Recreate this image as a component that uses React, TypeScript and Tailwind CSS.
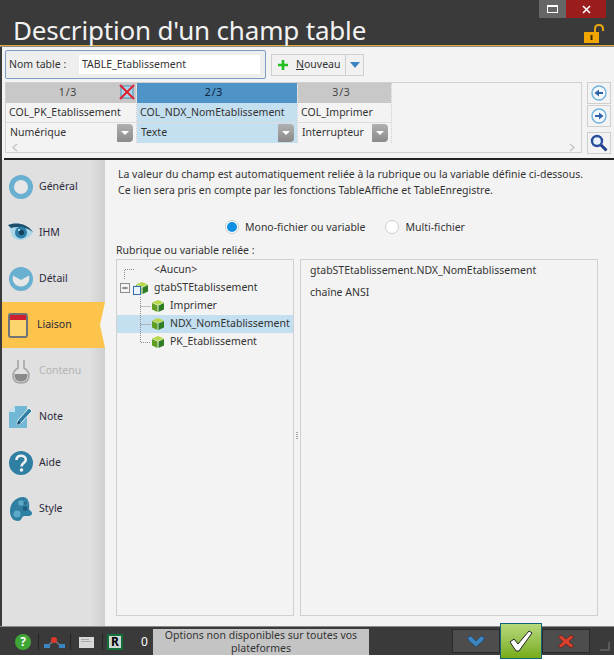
import type { ReactNode } from "react";

function Cube({ className = "" }: { className?: string }) {
  return (
    <svg width="14" height="14" viewBox="0 0 14 14" className={className}>
      <path d="M7 1 13 3.5 7 6 1 3.5Z" fill="#b7d84a" />
      <path d="M1 4 6.5 6.5V13L1 10.5Z" fill="#5f9e1e" />
      <path d="M13 4 7.5 6.5V13L13 10.5Z" fill="#2f7d22" />
    </svg>
  );
}

function Combo({ label, selected }: { label: string; selected?: boolean }) {
  return (
    <div className={`flex h-5 items-center justify-between pl-1 pr-[3px] ${selected ? "bg-[#c3dff0]" : ""}`}>
      <span>{label}</span>
      <span className="flex h-[18px] w-4 items-center justify-center rounded-r-[4px] rounded-l-[1px] bg-gradient-to-b from-[#b0b0b0] to-[#8a8a8a]">
        <span className="h-0 w-0 border-x-[4px] border-t-[4px] border-x-transparent border-t-white" />
      </span>
    </div>
  );
}

function Column({
  head,
  name,
  type,
  width,
  selected,
  children,
}: {
  head: string;
  name: string;
  type: string;
  width: string;
  selected?: boolean;
  children?: ReactNode;
}) {
  return (
    <div className={`${width} relative shrink-0 border-r border-dotted border-[#cfcfcf]`}>
      <div className={`flex h-[20px] items-center justify-center pr-[6px] tracking-[0.8px] ${selected ? "bg-[#4f94c6] text-[#10233a]" : "bg-[#c8c8c8] text-[#444]"}`}>
        {head}
      </div>
      <div className={`flex h-[20px] items-center border-b border-[#dcdcdc] pl-[3px] ${selected ? "bg-[#c3dff0]" : ""}`}>{name}</div>
      <Combo label={type} selected={selected} />
      {children}
    </div>
  );
}

function SideIcon({ name }: { name: string }) {
  if (name === "general")
    return (
      <svg width="24" height="24" viewBox="0 0 24 24">
        <circle cx="12" cy="12" r="9.5" fill="#e6e6e6" stroke="#68afd0" strokeWidth="5" />
      </svg>
    );
  if (name === "ihm")
    return (
      <svg width="25" height="20" viewBox="0 0 25 20">
        <path d="M0 2C7-1 19 0 25 9 21 17 9 20 4 13 3 9 2 5 0 2Z" fill="#a9d6e8" />
        <path d="M0 2C7-1 19 0 25 9 19 4 9 3 3 5Z" fill="#1d4f6c" />
        <circle cx="13" cy="9.5" r="6" fill="#2d7ea6" />
        <circle cx="13.5" cy="9.5" r="2.6" fill="#123f5a" />
        <circle cx="11" cy="7" r="1" fill="#cfeaf5" />
      </svg>
    );
  if (name === "detail")
    return (
      <svg width="24" height="24" viewBox="0 0 24 24">
        <circle cx="12" cy="12" r="12" fill="#68afd0" />
        <path d="M4 8.5 12 13 20 8.5C21.5 14 18 19.5 12 19.5S2.5 14 4 8.5Z" fill="#e6e6e6" />
      </svg>
    );
  if (name === "liaison")
    return (
      <svg width="20" height="25" viewBox="0 0 20 25" className="-ml-[3px]">
        <rect x="1" y="1" width="18" height="23" rx="2" fill="#fdd56f" stroke="#6f7378" strokeWidth="2" />
        <rect x="2" y="2" width="16" height="5" fill="#cf1f2e" />
      </svg>
    );
  if (name === "contenu")
    return (
      <svg width="18" height="25" viewBox="0 0 18 25">
        <path d="M6 1V9C3 11 1 13 1 16 1 21 4 24 9 24S17 21 17 16C17 13 15 11 12 9V1" fill="#e2e2e2" stroke="#a5a5a5" strokeWidth="1.6" />
        <path d="M2.5 15H15.5C16 20 13 22.5 9 22.5S2 20 2.5 15Z" fill="#8a8a8a" />
      </svg>
    );
  if (name === "note")
    return (
      <svg width="25" height="24" viewBox="0 0 25 24">
        <path d="M7 1H19V23H1V7Z" fill="#72b7d6" />
        <path d="M1 7H7V1Z" fill="#c7e3ef" />
        <path d="M10 15 21 3 24 6 13 18 9 20Z" fill="#2f7fa3" stroke="#e6f3f9" strokeWidth="1" />
        <path d="M9 20 10 16 13 18Z" fill="#123f5a" />
      </svg>
    );
  if (name === "aide")
    return (
      <svg width="24" height="24" viewBox="0 0 24 24">
        <circle cx="12" cy="12" r="12" fill="#2f7fa3" />
        <path d="M7.5 9C7.5 6 9.5 4.8 12 4.8S16.8 6.2 16.8 8.8C16.8 12 12.5 12 12.5 15.5" fill="none" stroke="#f1f1f1" strokeWidth="2.6" />
        <circle cx="12.5" cy="19" r="1.8" fill="#f1f1f1" />
      </svg>
    );
  return (
    <svg width="24" height="24" viewBox="0 0 24 24">
      <path d="M14 0C7 0 1 6 1 14 1 20 4 24 9 24 13 24 12 20 15 19 18 19 23 20 23 16 23 14 20 14 20 11 21 6 19 0 14 0Z" fill="#2f7fa3" />
      <circle cx="8" cy="17" r="3.6" fill="#5ea9c9" />
      <circle cx="12" cy="6" r="2.8" fill="#5ea9c9" />
      <circle cx="16.5" cy="6" r="2.4" fill="#2a6d8e" stroke="#5ea9c9" strokeWidth="0.6" />
      <circle cx="16" cy="11.5" r="2.4" fill="#1e5e7e" />
    </svg>
  );
}

const sideItems = [
  { id: "general", label: "Général" },
  { id: "ihm", label: "IHM" },
  { id: "detail", label: "Détail" },
  { id: "liaison", label: "Liaison", active: true },
  { id: "contenu", label: "Contenu", disabled: true },
  { id: "note", label: "Note" },
  { id: "aide", label: "Aide" },
  { id: "style", label: "Style" },
];

function Side() {
  return (
    <div className="flex w-[103px] shrink-0 flex-col bg-gradient-to-r from-[#e0e0e0] from-85% to-[#cfcfcf] pt-[4px]">
      {sideItems.map((item) => (
        <div
          key={item.id}
          className={`relative flex h-[46px] items-center ${item.active ? "bg-[#fdc44b]" : ""}`}
        >
          <div className={`flex justify-center ${item.active ? "w-[35px]" : "w-[37px]"}`}>
            <SideIcon name={item.id} />
          </div>
          <span className={item.disabled ? "text-[#b4b4b4]" : "text-[#2a2a3a]"}>{item.label}</span>
          {item.active && (
            <span className="absolute right-0 top-0 h-0 w-0 border-y-[23px] border-r-[5px] border-y-transparent border-r-[#f3f3f3]" />
          )}
        </div>
      ))}
    </div>
  );
}

function Radio({ label, checked }: { label: string; checked?: boolean }) {
  return (
    <div className="flex items-center gap-[6px]">
      <span className="flex h-[14px] w-[14px] items-center justify-center rounded-full border border-[#cfcfcf] bg-white">
        {checked && <span className="h-[10px] w-[10px] rounded-full bg-[#0d8fe6]" />}
      </span>
      <span>{label}</span>
    </div>
  );
}

function TreeRow({
  line,
  icon,
  label,
  selected,
  pad,
}: {
  line: ReactNode;
  icon?: ReactNode;
  label: string;
  selected?: boolean;
  pad: string;
}) {
  return (
    <div className={`flex h-[18px] items-center ${selected ? "bg-[#c3dff0]" : ""}`}>
      <div className="h-[18px] w-[34px] shrink-0">{line}</div>
      <div className={`flex items-center whitespace-nowrap ${pad}`}>
        {icon}
        <span>{label}</span>
      </div>
    </div>
  );
}

function Connector({ last }: { last?: boolean }) {
  return (
    <svg width="34" height="18">
      <path d={last ? "M23.5 0V9.5H34" : "M23.5 0V18M23.5 9.5H34"} fill="none" stroke="#8e8e8e" strokeDasharray="1 1" />
    </svg>
  );
}

function Tree() {
  return (
    <div className="w-[178px] shrink-0 border border-[#d0d0d0] pt-[1px]">
      <TreeRow
        pad="pl-[3px]"
        label="<Aucun>"
        line={
          <svg width="34" height="18">
            <path d="M7.5 18V8.5H17" fill="none" stroke="#8e8e8e" strokeDasharray="1 1" />
          </svg>
        }
      />
      <TreeRow
        pad=""
        label="gtabSTEtablissement"
        icon={
          <span className="relative mr-[5px] ml-[-18px] flex h-4 w-4 shrink-0 items-center">
            <Cube className="ml-[2px]" />
            <span className="absolute left-0 top-[6px] h-[9px] w-2 border border-[#2f6fb0] bg-[#eaf2fa]" />
          </span>
        }
        line={
          <svg width="34" height="18">
            <rect x="3.5" y="4.5" width="9" height="9" fill="#f3f3f3" stroke="#8e8e8e" />
            <path d="M5.5 9H10.5" stroke="#222" />
          </svg>
        }
      />
      <TreeRow pad="" label="Imprimer" icon={<Cube className="mr-[5px]" />} line={<Connector />} />
      <TreeRow pad="" label="NDX_NomEtablissement" selected icon={<Cube className="mr-[5px]" />} line={<Connector />} />
      <TreeRow pad="" label="PK_Etablissement" icon={<Cube className="mr-[5px]" />} line={<Connector last />} />
    </div>
  );
}

function SideBtn({ children, className = "" }: { children: ReactNode; className?: string }) {
  return (
    <div className={`flex h-[22px] w-[24px] items-center justify-center border border-[#cfcfcf] ${className}`}>
      {children}
    </div>
  );
}

function Arrow({ left }: { left?: boolean }) {
  return (
    <svg width="16" height="16" viewBox="0 0 16 16">
      <circle cx="8" cy="8" r="7" fill="#f4f9fd" stroke="#6fb2dd" strokeWidth="1.4" />
      <path d={left ? "M3.5 8 8 4.5V7H12V9H8V11.5Z" : "M12.5 8 8 4.5V7H4V9H8V11.5Z"} fill="#2f62a8" />
    </svg>
  );
}

export default function App() {
  return (
    <div className="h-[660px] w-[614px] bg-white text-[10.5px] text-[#333] [font-family:'Noto_Sans',sans-serif]">
      <div className="flex h-[655px] flex-col bg-[#3a3a3a]">
        {/* title bar */}
        <div className="relative h-[45px] shrink-0 pl-[13px]">
          <h1 className="pt-[12px] text-[26px] leading-[36px] tracking-[-0.18px] text-[#f2f2f2]">Description d'un champ table</h1>
          <div className="absolute right-[8px] top-0 flex h-[18px]">
            <div className="flex w-[27px] items-center justify-center bg-[#666]">
              <span className="h-[8px] w-[11px] border border-t-2 border-white" />
            </div>
            <div className="flex w-[40px] items-center justify-center bg-[#9b1c1c]">
              <svg width="9" height="9" viewBox="0 0 9 9">
                <path d="M1 1 8 8M8 1 1 8" stroke="#fff" strokeWidth="1.6" />
              </svg>
            </div>
          </div>
          <svg width="20" height="20" viewBox="0 0 20 20" className="absolute right-[10px] top-[24px]">
            <path d="M11 8V5C11 2 13 1 15 1S19 2 19 5V7" fill="none" stroke="#e8a60c" strokeWidth="2" />
            <rect x="0" y="8" width="15" height="11" fill="#f0a500" />
            <rect x="6.5" y="11" width="2" height="5" fill="#3a2a00" />
          </svg>
        </div>
        <div className="h-[2px] shrink-0 border-t border-[#e0a92f] bg-[#8a8a8a]" />

        {/* top section */}
        <div className="ml-[2px] flex h-[111px] shrink-0 flex-col bg-[#f3f3f3] pl-[3px] pr-[3px] pt-[3px]">
          <div className="flex items-center gap-[5px]">
            <div className="flex h-[29px] w-[261px] items-center rounded-[2px] border border-[#7c9cc2] bg-[#eeeeee] pl-[3px]">
              <span className="w-[70px]">Nom table :</span>
              <div className="flex h-[19px] w-[181px] items-center bg-white pl-[3px]">TABLE_Etablissement</div>
            </div>
            <div className="flex h-[22px] w-[93px] items-center border border-[#cfcfcf] bg-[#f1f1f1]">
              <svg width="12" height="12" viewBox="0 0 12 12" className="ml-[5px] mr-[7px]">
                <path d="M6 1V11M1 6H11" stroke="#1fc01f" strokeWidth="2.6" />
              </svg>
              <span className="w-[49px]">
                <span className="underline">N</span>ouveau
              </span>
              <span className="flex h-full flex-1 items-center justify-center border-l border-[#cfcfcf]">
                <span className="h-0 w-0 border-x-[5px] border-t-[6px] border-x-transparent border-t-[#3d85c0]" />
              </span>
            </div>
          </div>
          <div className="mt-[3px] flex gap-[5px]">
            <div className="flex h-[71px] w-[577px] flex-col justify-between border border-[#d0d0d0]">
              <div className="flex">
                <Column width="w-[131px]" head="1/3" name="COL_PK_Etablissement" type="Numérique">
                  <svg width="16" height="16" viewBox="0 0 16 16" className="absolute right-[1px] top-[1px]">
                    <rect x="2" y="2" width="12" height="12" fill="#a9d6ec" stroke="#4a8fb5" />
                    <path d="M1 1 15 15M15 1 1 15" stroke="#e0212b" strokeWidth="2" />
                  </svg>
                </Column>
                <Column width="w-[161px]" head="2/3" name="COL_NDX_NomEtablissement" type="Texte" selected />
                <Column width="w-[94px]" head="3/3" name="COL_Imprimer" type="Interrupteur" />
              </div>
              <div className="flex h-[10px] items-center justify-between px-[6px] text-[#c4c4c4]">
                <svg width="6" height="9" viewBox="0 0 6 9">
                  <path d="M5 1 1 4.5 5 8" fill="none" stroke="#c4c4c4" strokeWidth="1.4" />
                </svg>
                <svg width="6" height="9" viewBox="0 0 6 9">
                  <path d="M1 1 5 4.5 1 8" fill="none" stroke="#c4c4c4" strokeWidth="1.4" />
                </svg>
              </div>
            </div>
            <div className="flex flex-col">
              <SideBtn><Arrow left /></SideBtn>
              <SideBtn className="mt-[1px]"><Arrow /></SideBtn>
              <SideBtn className="mt-[5px]">
                <svg width="18" height="18" viewBox="0 0 18 18">
                  <circle cx="7" cy="7" r="5" fill="#eaf2fb" stroke="#2a4f9e" strokeWidth="2.4" />
                  <path d="M11 11 16.5 16.5" stroke="#1f3f8c" strokeWidth="3" />
                </svg>
              </SideBtn>
            </div>
          </div>
        </div>

        {/* main */}
        <div className="ml-[2px] flex min-h-0 flex-1 flex-col bg-[#f3f3f3]">
          <div className="ml-[2px] h-[2px] shrink-0 bg-[#222]" />
          <div className="flex min-h-0 flex-1">
            <Side />
            <div className="flex min-w-0 flex-1 flex-col pl-[11px] pr-[16px]">
              <div className="whitespace-nowrap pl-[2px] pt-[6px] leading-[16px]">
                <p>La valeur du champ est automatiquement reliée à la rubrique ou la variable définie ci-dessous.</p>
                <p>Ce lien sera pris en compte par les fonctions TableAffiche et TableEnregistre.</p>
              </div>
              <div className="mt-[21px] flex gap-[20px] pl-[109px] leading-[16px]">
                <Radio label="Mono-fichier ou variable" checked />
                <Radio label="Multi-fichier" />
              </div>
              <div className="mt-[7px] leading-[16px]">Rubrique ou variable reliée :</div>
              <div className="relative mt-[1px] flex h-[357px] gap-[6px]">
                <Tree />
                {/* splitter grip */}
                <div className="absolute left-[180px] top-[173px] flex w-[2px] flex-col gap-px">
                  <span className="h-px bg-[#a8a8a8]" />
                  <span className="h-px bg-[#a8a8a8]" />
                  <span className="h-px bg-[#a8a8a8]" />
                  <span className="h-px bg-[#a8a8a8]" />
                </div>
                <div className="flex flex-1 flex-col border border-[#d0d0d0] pl-[9px] pt-[1px] leading-[18px]">
                  <p>gtabSTEtablissement.NDX_NomEtablissement</p>
                  <p className="mt-[4px]">chaîne ANSI</p>
                </div>
              </div>
            </div>
          </div>
        </div>
        <div className="h-px shrink-0 bg-[#8a8a8a]" />

        {/* footer */}
        <div className="relative flex h-[28px] shrink-0 items-end pl-[15px]">
          <div className="flex h-[26px] items-center">
            <span className="mr-[7px] flex h-4 w-4 items-center justify-center rounded-full bg-[#3fa535] text-[12px] font-bold text-white">?</span>
            <span className="h-4 w-px bg-[#222]" />
            <svg width="31" height="14" viewBox="0 0 31 14">
              <path d="M8 12 15 5 23 12" fill="none" stroke="#7a7a7a" strokeWidth="1.5" />
              <circle cx="15" cy="5" r="3" fill="#e0392b" />
              <rect x="5" y="9" width="6" height="4" fill="#3d85c0" />
              <rect x="20" y="9" width="6" height="4" fill="#3d85c0" />
            </svg>
            <span className="h-4 w-px bg-[#222]" />
            <span className="mx-[8px] flex h-[11px] w-[15px] flex-col gap-px bg-[#d8d8d8] p-[2px]">
              <span className="h-px w-[8px] bg-[#aaa]" />
              <span className="h-px w-[10px] bg-[#aaa]" />
            </span>
            <span className="h-4 w-px bg-[#222]" />
            <span className="ml-[4px] flex h-4 w-4 items-center justify-center border-2 border-[#14703a] bg-[#cfd8d2] text-[12px] font-bold leading-none text-black">R</span>
            <span className="ml-[18px] w-[12px] text-[12px] text-white">0</span>
          </div>
          <div className="flex h-[26px] w-[216px] items-center justify-center bg-[#c4c4c4] text-center leading-[13px] text-[#333]">
            Options non disponibles sur toutes vos plateformes
          </div>
          <div className="ml-[83px] flex h-[24px] w-[48px] items-center justify-center self-center border border-[#2a2a2a] bg-[#4d4d4d]">
            <svg width="18" height="13" viewBox="0 0 18 13">
              <path d="M1 2 4 1 9 6 14 1 17 2V5L9 12 1 5Z" fill="#3d85c0" stroke="#1e3d5a" strokeWidth="0.7" />
            </svg>
          </div>
          <div className="w-[42px]" />
          <div className="flex h-[24px] w-[48px] items-center justify-center self-center border border-[#2a2a2a] bg-[#4d4d4d]">
            <svg width="18" height="15" viewBox="0 0 18 15">
              <path d="M1 3 4 1 9 5 14 1 17 3 12 7.5 17 12 14 14 9 10 4 14 1 12 6 7.5Z" fill="#d9402e" stroke="#3a1a14" strokeWidth="0.6" />
            </svg>
          </div>
          {/* valider sits over the footer edge */}
          <div className="absolute bottom-[-4px] left-[500px] flex h-[36px] w-[42px] items-center justify-center border border-[#14607f] bg-gradient-to-b from-[#b7d97a] to-[#78ac10]">
            <svg width="24" height="22" viewBox="0 0 24 22">
              <path d="M1 12 5 9 9 14 20 1 23 3 10 21H7Z" fill="#fff" stroke="#222" strokeWidth="1" />
            </svg>
          </div>
          <svg width="10" height="10" viewBox="0 0 10 10" className="absolute bottom-[4px] right-[4px]">
            <path d="M10 0V10H0V8H8V2Z" fill="#5a5a5a" />
          </svg>
        </div>
      </div>
    </div>
  );
}
